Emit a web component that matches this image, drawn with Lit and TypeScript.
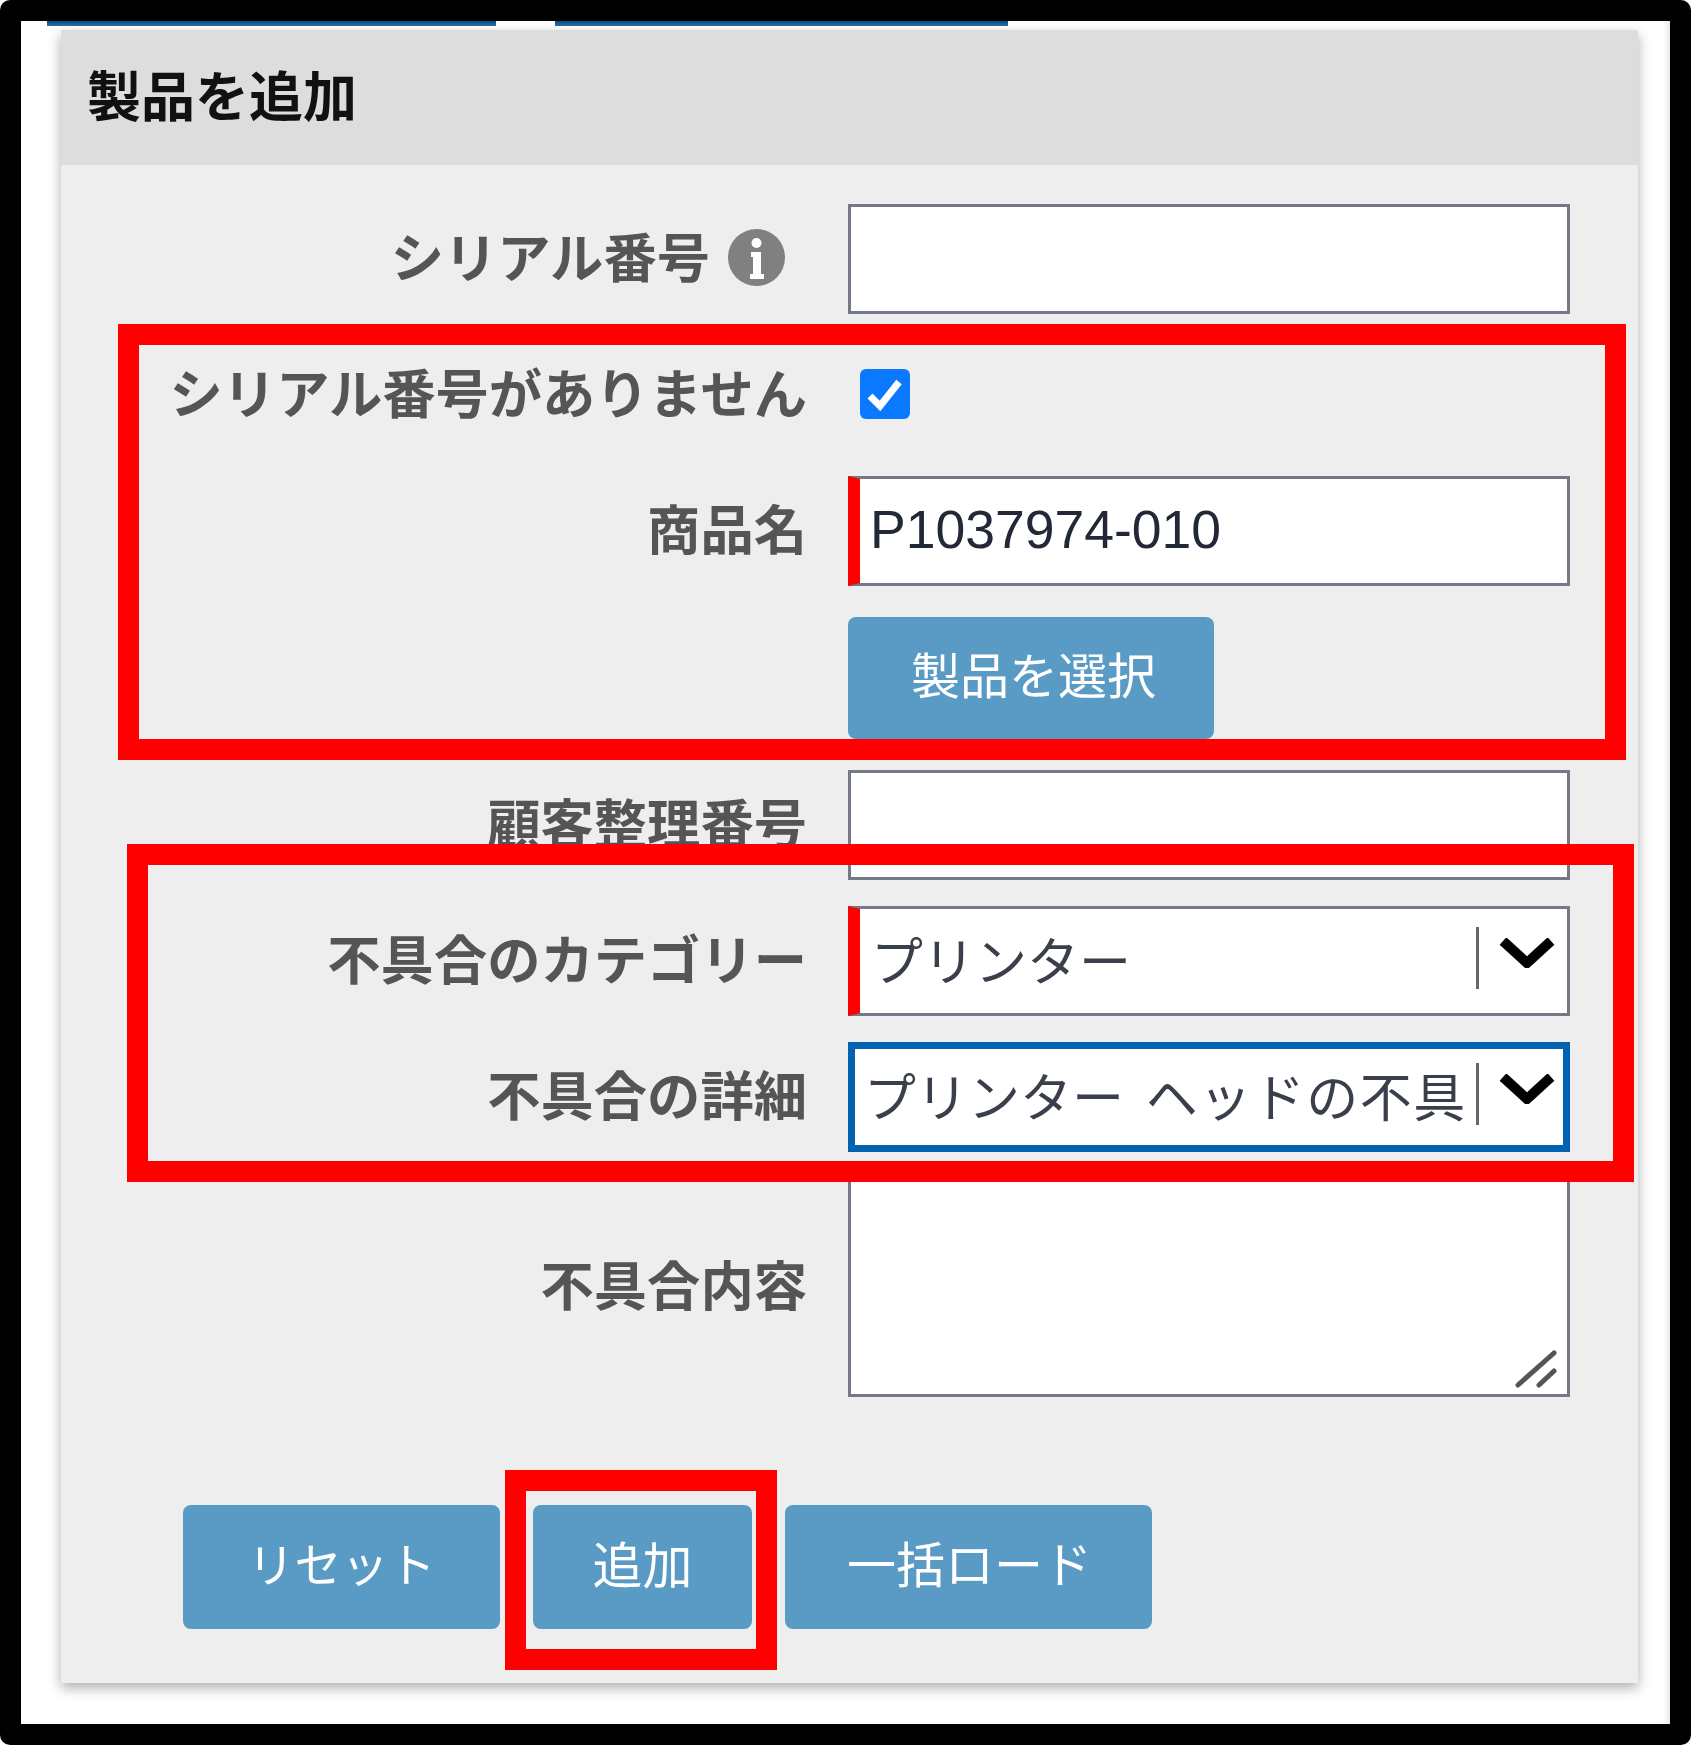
import { LitElement, html, css } from "lit";
import { customElement } from "lit/decorators.js";

@customElement("app-root")
export class AppRoot extends LitElement {
  static styles = css`
    :host {
      display: block;
      position: relative;
      width: 1691px;
      height: 1745px;
      font-family: "Noto Sans CJK JP", "Liberation Sans", sans-serif;
      background: #fff;
    }
    .frame {
      box-sizing: border-box;
      height: 1745px;
      border: 21px solid #000;
      border-radius: 10px;
      background: #fff;
      box-shadow: inset -5px 0 6px -3px rgba(0, 0, 0, 0.12);
      overflow: hidden;
    }
    .tabs {
      display: flex;
      height: 9px;
      padding-left: 26px;
      gap: 59px;
    }
    .tab {
      height: 5px;
      background: linear-gradient(#0a4a82, #2f6da3);
    }
    .tab.a { width: 449px; }
    .tab.b { width: 453px; }
    .panel {
      margin: 0 32px 0 40px;
      background: #eeeeee;
      box-shadow: 0 5px 12px rgba(0, 0, 0, 0.32);
    }
    .head {
      display: flex;
      align-items: center;
      box-sizing: border-box;
      height: 135px;
      padding: 0 0 9px 26px;
      background: #dddddd;
      color: #111;
      font-size: 54px;
      font-weight: 700;
    }
    .head span {
      filter: blur(0.6px);
    }
    .body {
      padding: 39px 68px 54px 0;
    }
    .grid {
      display: grid;
      grid-template-columns: 744px 722px;
      column-gap: 43px;
      row-gap: 26px;
      align-items: center;
    }
    .label {
      display: flex;
      justify-content: flex-end;
      align-items: center;
      margin-right: -2px;
      padding-bottom: 9px;
      color: #555;
      font-size: 53.3px;
      font-weight: 700;
      line-height: 1;
      white-space: nowrap;
    }
    .label span {
      filter: blur(0.6px);
    }
    .info {
      width: 57px;
      height: 57px;
      margin: 5px 22px 0 18px;
    }
    .field {
      display: block;
      box-sizing: border-box;
      width: 722px;
      height: 110px;
      margin: 0;
      border: 3px solid #747a85;
      background: #fff;
      outline: none;
      padding: 0 0 4px 10px;
      color: #232838;
      font-family: "Liberation Sans", sans-serif;
      font-size: 53.5px;
    }
    .req {
      border-left: 12px solid #ff0000;
    }
    .check-cell {
      height: 110px;
      display: flex;
      align-items: center;
      padding-left: 12px;
    }
    .check {
      display: flex;
      width: 50px;
      height: 50px;
      margin-top: -2px;
      border-radius: 6px;
      background: #0a78ff;
    }
    .select {
      display: flex;
      align-items: center;
      padding: 0 12px 0 11px;
      font-family: "Noto Sans CJK JP", sans-serif;
      font-weight: 400;
      font-size: 52px;
      word-spacing: 10px;
      color: #3a3f4c;
    }
    .select.focus {
      border: 7px solid #0062b1;
      padding: 0 8px 0 9px;
    }
    .select .value {
      flex: 1;
      min-width: 0;
      margin-top: -6px;
      white-space: nowrap;
      filter: blur(0.5px);
    }
    .tail {
      letter-spacing: 1.5px;
    }
    .sep {
      flex: none;
      width: 3px;
      height: 62px;
      background: #666;
      margin: -7px 20px 0 0;
    }
    .chev {
      flex: none;
      width: 56px;
      height: 30px;
      margin-top: -16px;
    }
    .area {
      display: flex;
      align-items: flex-end;
      justify-content: flex-end;
      height: 219px;
      padding: 0 10px 6px 0;
    }
    .btn {
      display: flex;
      align-items: center;
      justify-content: center;
      box-sizing: border-box;
      border: 0;
      border-radius: 8px;
      background: #5a9bc6;
      color: #fff;
      font-family: "Noto Sans CJK JP", sans-serif;
      font-size: 49px;
      font-weight: 400;
      padding: 0 0 11px;
    }
    .btn span {
      filter: blur(0.6px);
    }
    .pick {
      width: 366px;
      height: 122px;
      margin-top: 5px;
      padding-left: 5px;
    }
    .cust {
      margin-top: 5px;
    }
    .actions {
      display: flex;
      gap: 33px;
      margin: 108px 0 0 122px;
    }
    .actions .btn {
      height: 124px;
    }
    .w1 { width: 317px; font-size: 47px; }
    .w2 { width: 219px; font-size: 50px; }
    .w3 { width: 367px; padding-left: 2px; }
    .mark {
      position: absolute;
      box-sizing: border-box;
      border: 21px solid #ff0000;
      pointer-events: none;
    }
    .m1 { left: 118px; top: 324px; width: 1508px; height: 436px; }
    .m2 { left: 127px; top: 844px; width: 1507px; height: 338px; }
    .m3 { left: 505px; top: 1470px; width: 272px; height: 200px; }
    .cust-label { margin-top: 5px; }
  `;

  private chevron() {
    return html`<svg class="chev" viewBox="0 0 56 30">
      <path d="M4 3 L28 25 L52 3" fill="none" stroke="#000" stroke-width="10" />
    </svg>`;
  }

  render() {
    return html`
      <div class="frame">
        <div class="tabs"><div class="tab a"></div><div class="tab b"></div></div>
        <section class="panel">
          <div class="head"><span>製品を追加</span></div>
          <div class="body">
            <div class="grid">
              <div class="label">
                <span>シリアル番号</span>
                <svg class="info" viewBox="0 0 57 57">
                  <circle cx="28.5" cy="28.5" r="28.5" fill="#808080" />
                  <circle cx="28.5" cy="14" r="5" fill="#fff" />
                  <path d="M23 23h10v22h3v5H22v-5h3V28h-2z" fill="#fff" />
                </svg>
              </div>
              <input class="field" type="text" />

              <div class="label"><span>シリアル番号がありません</span></div>
              <div class="check-cell">
                <div class="check">
                  <svg viewBox="0 0 50 50" width="50" height="50">
                    <path d="M10 27 L20 37 L39 13" fill="none" stroke="#fff" stroke-width="7" />
                  </svg>
                </div>
              </div>

              <div class="label"><span>商品名</span></div>
              <input class="field req" type="text" .value=${"P1037974-010"} />

              <div></div>
              <button class="btn pick"><span>製品を選択</span></button>

              <div class="label cust-label"><span>顧客整理番号</span></div>
              <input class="field cust" type="text" />

              <div class="label"><span>不具合のカテゴリー</span></div>
              <div class="field req select">
                <span class="value">プリンター</span>
                <div class="sep"></div>
                ${this.chevron()}
              </div>

              <div class="label"><span>不具合の詳細</span></div>
              <div class="field select focus">
                <span class="value">プリンター <span class="tail">ヘッドの不具</span></span>
                <div class="sep"></div>
                ${this.chevron()}
              </div>

              <div class="label"><span>不具合内容</span></div>
              <div class="field area">
                <svg width="44" height="38" viewBox="0 0 44 38">
                  <path d="M5 35 L41 3 M26 35 L41 21" stroke="#555" stroke-width="5" stroke-linecap="round" />
                </svg>
              </div>
            </div>
            <div class="actions">
              <button class="btn w1"><span>リセット</span></button>
              <button class="btn w2"><span>追加</span></button>
              <button class="btn w3"><span>一括ロード</span></button>
            </div>
          </div>
        </section>
      </div>
      <div class="mark m1"></div>
      <div class="mark m2"></div>
      <div class="mark m3"></div>
    `;
  }
}
